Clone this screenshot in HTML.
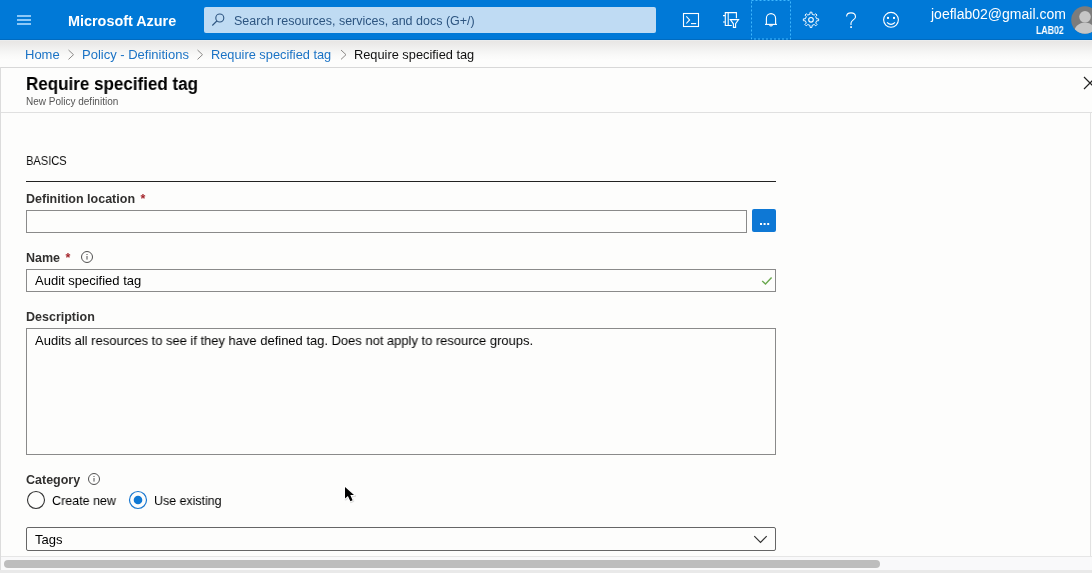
<!DOCTYPE html>
<html><head><meta charset="utf-8">
<style>
*{box-sizing:border-box;margin:0;padding:0}
html,body{width:1092px;height:573px;overflow:hidden;background:#fdfdfc;font-family:"Liberation Sans",sans-serif;color:#000;position:relative}
.a{position:absolute}
.t{position:absolute;white-space:nowrap;line-height:1;will-change:transform}
.lnk{color:#1b73c5}
.lbl{font-size:12.5px;font-weight:bold;color:#323130}
.box{position:absolute;border:1px solid #8a8a8a;background:#fdfdfc}
svg{position:absolute;overflow:visible}
</style></head><body>
<!-- top bar -->
<div class="a" style="left:0;top:0;width:1092px;height:40px;background:#0079d7"></div>
<div class="a" style="left:0;top:39px;width:1092px;height:1px;background:#006bc0"></div>
<div class="a" style="left:17px;top:15px;width:14px;height:2px;background:#8cc8f7"></div>
<div class="a" style="left:17px;top:19px;width:14px;height:2px;background:#8cc8f7"></div>
<div class="a" style="left:17px;top:23px;width:14px;height:2px;background:#8cc8f7"></div>
<div class="t" style="left:68px;top:14px;font-size:14.4px;font-weight:bold;color:#fff">Microsoft Azure</div>
<div class="a" style="left:204px;top:7px;width:452px;height:26px;background:#bfdbf3;border-radius:2px"></div>
<div class="t" style="left:234px;top:15px;font-size:12.5px;color:#2d5580">Search resources, services, and docs (G+/)</div>
<div class="t" style="left:931px;top:7px;font-size:14px;color:#fff">joeflab02@gmail.com</div>
<div class="t" style="left:1036px;top:26px;font-size:10px;font-weight:bold;color:#fff;transform:scaleX(0.88);transform-origin:0 0">LAB02</div>

<!-- breadcrumb -->
<div class="a" style="left:0;top:40px;width:1092px;height:27px;background:linear-gradient(#eef2f6 0px,#e8e6e4 1px,#ebeae9 4px,#f3f3f2 10px,#f9f9f8 15px,#fdfdfc 20px)"></div>
<div class="t lnk" style="left:25px;top:48px;font-size:13px">Home</div>
<div class="t lnk" style="left:82px;top:48px;font-size:13px">Policy - Definitions</div>
<div class="t lnk" style="left:211px;top:49px;font-size:12.8px">Require specified tag</div>
<div class="t" style="left:354px;top:49px;font-size:12.8px;color:#111">Require specified tag</div>

<!-- panel -->
<div class="a" style="left:0;top:67px;width:1092px;height:1px;background:#d8d8d8"></div>

<div class="t" style="left:26px;top:75px;font-size:18px;font-weight:bold;transform:scaleX(0.945);transform-origin:0 0">Require specified tag</div>
<div class="t" style="left:26px;top:97px;font-size:10px;color:#555">New Policy definition</div>
<div class="a" style="left:0;top:112px;width:1092px;height:1px;background:#e0e0e0"></div>
<div class="a" style="left:1090px;top:112px;width:1px;height:445px;background:#e2e2e2"></div>

<div class="t" style="left:26px;top:153.5px;font-size:13.6px;color:#111;transform:scaleX(0.815);transform-origin:0 0">BASICS</div>
<div class="a" style="left:26px;top:181px;width:750px;height:1px;background:#222"></div>
<div class="t lbl" style="left:26px;top:193px">Definition location <span style="color:#a4262c;margin-left:2px">*</span></div>
<div class="box" style="left:26px;top:210px;width:721px;height:23px"></div>
<div class="a" style="left:752px;top:209px;width:24px;height:23px;background:#0e78d5;border-radius:2px"></div>
<div class="t lbl" style="left:26px;top:252px">Name <span style="color:#a4262c;margin-left:2px">*</span></div>
<div class="box" style="left:26px;top:269px;width:750px;height:23px"></div>
<div class="t" style="left:35px;top:274px;font-size:13px">Audit specified tag</div>
<div class="t lbl" style="left:26px;top:311px">Description</div>
<div class="box" style="left:26px;top:328px;width:750px;height:127px"></div>
<div class="t" style="left:35px;top:334px;font-size:13px;transform:scaleX(0.996);transform-origin:0 0">Audits all resources to see if they have defined tag. Does not apply to resource groups.</div>
<div class="t lbl" style="left:26px;top:474px">Category</div>
<div class="t" style="left:52px;top:494px;font-size:13px;transform:scaleX(0.962);transform-origin:0 0">Create new</div>
<div class="t" style="left:154px;top:494px;font-size:13px;transform:scaleX(0.955);transform-origin:0 0">Use existing</div>
<div class="box" style="left:26px;top:527px;width:750px;height:24px;border-color:#666;border-radius:2px"></div>
<div class="t" style="left:35px;top:533px;font-size:13px">Tags</div>
<div class="a" style="left:0;top:556px;width:1092px;height:1px;background:#e6e6e6"></div>
<div class="a" style="left:1px;top:557px;width:1091px;height:16px;background:#f9f9fa"></div>
<div class="a" style="left:4px;top:560px;width:876px;height:8px;background:#bdbdbd;border-radius:4px"></div>
<div class="a" style="left:0;top:570px;width:1092px;height:3px;background:#e9e9e9"></div>
<div class="a" style="left:0;top:67px;width:1px;height:503px;background:#dcdcdc"></div>
<svg width="1092" height="573" style="left:0;top:0" viewBox="0 0 1092 573">
<!-- search magnifier -->
<g fill="none" stroke="#2d5580" stroke-width="1.1">
<circle cx="219.8" cy="18" r="4"/><path d="M216.8,21 L212.3,25.5"/></g>
<!-- icons top -->
<g fill="none" stroke="#fff" stroke-width="1.1">
<rect x="683.5" y="13.5" width="15" height="13"/>
<path d="M686.3,16.3 L689.6,19.9 L686.3,23.5"/>
<path d="M691,23.6 H696.2"/>
<path d="M731.8,25.5 H725.3 V12.6 H736.4 V18.2"/>
<path d="M728.2,12.8 V25.3"/>
<path d="M723,15.6 H725 M723,22 H725"/>
<path d="M730.3,19.6 H738.6 L735.6,23.8 V27.4 H733.4 V23.8 Z" fill="#0079d7"/>
<path d="M766.4,24 V18.2 A4.6,4.6 0 0 1 775.6,18.2 V24"/>
<path d="M765,24.4 H777"/>
<path d="M769.6,25 A1.5,1.5 0 0 0 772.4,25"/>
<path d="M816.60,18.73 L818.65,18.89 L818.65,20.71 L816.60,20.87 L815.71,23.00 L817.05,24.57 L815.77,25.85 L814.20,24.51 L812.07,25.40 L811.91,27.45 L810.09,27.45 L809.93,25.40 L807.80,24.51 L806.23,25.85 L804.95,24.57 L806.29,23.00 L805.40,20.87 L803.35,20.71 L803.35,18.89 L805.40,18.73 L806.29,16.60 L804.95,15.03 L806.23,13.75 L807.80,15.09 L809.93,14.20 L810.09,12.15 L811.91,12.15 L812.07,14.20 L814.20,15.09 L815.77,13.75 L817.05,15.03 L815.71,16.60Z" stroke-width="0.95" stroke-linejoin="round"/>
<circle cx="811" cy="19.8" r="2.3"/>
<path d="M846.6,16.6 C846.6,14.2 848.6,12.9 851,12.9 C853.6,12.9 855.5,14.6 855.5,16.9 C855.5,19.3 851,20.6 851,23 V25"/>
<circle cx="891" cy="19.8" r="7.4"/>
<path d="M887,22.3 Q891,26.3 895,22.3"/>
</g>
<g fill="#fff"><rect x="850.2" y="26.3" width="1.8" height="1.6"/>
<rect x="887" y="16.9" width="2" height="2"/><rect x="893" y="16.9" width="2" height="2"/>
</g>
<rect x="751.5" y="0.5" width="39" height="38.5" fill="none" stroke="#3fb8ff" stroke-width="1" stroke-dasharray="2,2"/>
<!-- avatar -->
<clipPath id="av"><circle cx="1085" cy="20" r="13.8"/></clipPath>
<circle cx="1085" cy="20" r="13.8" fill="#7c7c7c"/>
<g clip-path="url(#av)" fill="#c6c6c6"><circle cx="1085" cy="16.8" r="5.8"/><ellipse cx="1085" cy="33" rx="11" ry="10.5"/></g>
<!-- breadcrumb chevrons -->
<g fill="none" stroke="#8a8886" stroke-width="1">
<path d="M68.5,50 L73.5,54.7 L68.5,59.4"/>
<path d="M197.5,50 L202.5,54.7 L197.5,59.4"/>
<path d="M341,50 L346,54.7 L341,59.4"/>
</g>
<!-- close X -->
<g stroke="#222" stroke-width="1.2"><path d="M1084,77 L1096,89 M1084,89 L1096,77"/></g>
<!-- button dots -->
<g fill="#fff"><rect x="760" y="223" width="2" height="2"/><rect x="763.6" y="223" width="2" height="2"/><rect x="767.2" y="223" width="2" height="2"/></g>
<!-- info icons -->
<g fill="none" stroke="#505050" stroke-width="1"><circle cx="87" cy="257" r="5.5"/><circle cx="94" cy="479" r="5.5"/></g>
<g fill="#505050"><rect x="86.5" y="254" width="1" height="1"/><rect x="86.5" y="256" width="1" height="3.6"/>
<rect x="93.5" y="476" width="1" height="1"/><rect x="93.5" y="478" width="1" height="3.6"/></g>
<!-- check -->
<path d="M762.2,281 L765.5,284 L771.6,277.6" fill="none" stroke="#6aa84f" stroke-width="1.4"/>
<!-- radios -->
<circle cx="36" cy="500" r="8.5" fill="#fdfdfc" stroke="#333" stroke-width="1.1"/>
<circle cx="138" cy="500" r="8.5" fill="#fdfdfc" stroke="#1a78d0" stroke-width="1.2"/>
<circle cx="138" cy="500" r="4.3" fill="#0f78d4"/>
<!-- chevron dropdown -->
<path d="M754.3,536.2 L760.5,542.4 L766.7,536.2" fill="none" stroke="#333" stroke-width="1.2"/>
<!-- cursor -->
<path d="M345.6,488.2 L345.6,499.5 L348.6,496.6 L351,502 L353.2,501 L351,496 L355,496 Z" fill="#000" opacity="0.12" stroke="#000" stroke-width="2.2" stroke-linejoin="round"/><path d="M345,487 L345,498.6 L347.9,495.9 L350.4,501.2 L352.6,500.2 L350.3,495.1 L354,495.1 Z" fill="#000" stroke="#fff" stroke-width="2" stroke-linejoin="round" paint-order="stroke"/>
</svg>
</body></html>
